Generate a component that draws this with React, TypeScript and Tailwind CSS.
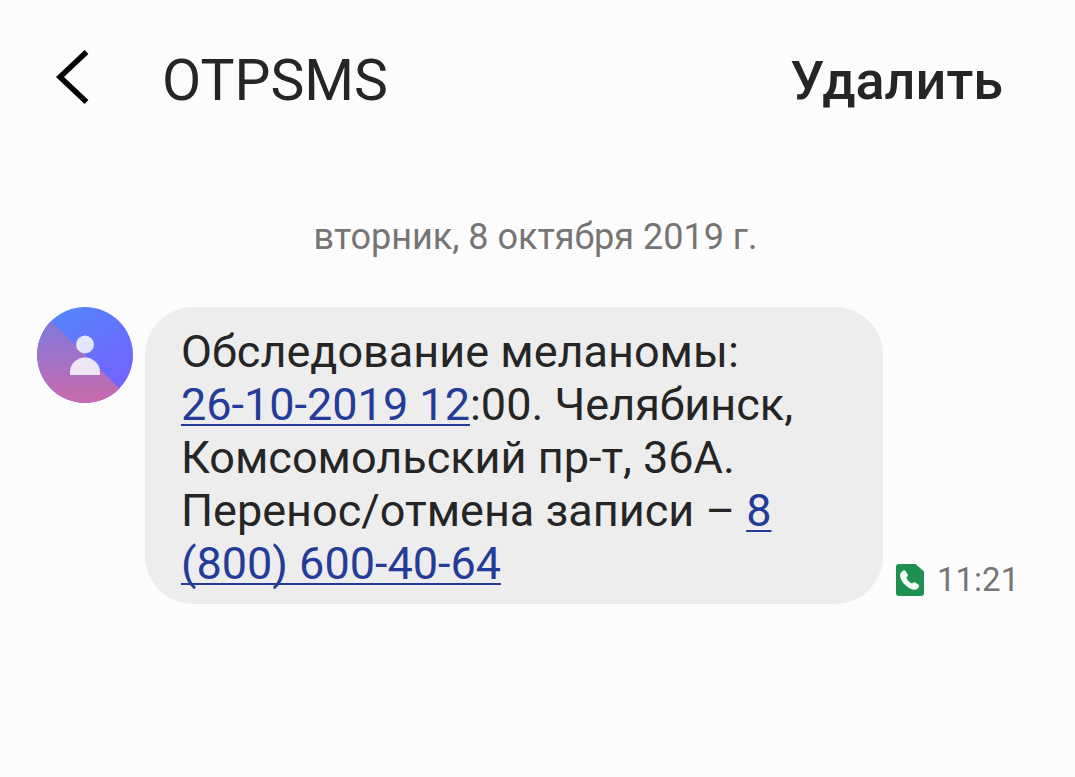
const message = {
  sender: "OTPSMS",
  date: "вторник, 8 октября 2019 г.",
  time: "11:21",
};

const linkClass = "text-[#233c99] underline decoration-2 underline-offset-4 [text-decoration-skip-ink:none]";

function BackIcon() {
  return (
    <svg viewBox="0 0 36 56" className="h-14 w-9" fill="none" stroke="#000" strokeWidth="5.5" aria-hidden="true">
      <path d="M32.5 4 L6 29 L32.5 54" />
    </svg>
  );
}

function Avatar() {
  return (
    <svg viewBox="0 0 96 96" className="size-24 shrink-0" aria-hidden="true">
      <defs>
        <linearGradient id="avatarTop" x1="0.2" y1="0" x2="0.8" y2="1">
          <stop offset="0" stopColor="#5287fd" />
          <stop offset="0.6" stopColor="#6a6cff" />
          <stop offset="1" stopColor="#7562ff" />
        </linearGradient>
        <linearGradient id="avatarBottom" x1="0" y1="0" x2="0" y2="1">
          <stop offset="0" stopColor="#8078dc" />
          <stop offset="0.5" stopColor="#a372c6" />
          <stop offset="1" stopColor="#cb6aaa" />
        </linearGradient>
      </defs>
      <circle cx="48" cy="48" r="48" fill="url(#avatarTop)" />
      {/* lower-left half of the disc */}
      <path d="M14.06 14.06 A48 48 0 1 0 82.5 81.38 Z" fill="url(#avatarBottom)" />
      <g fill="#fff" fillOpacity="0.82">
        <circle cx="48" cy="37.5" r="9" />
        <path d="M33 68 V65 A15 14.5 0 0 1 63 65 V68 Z" />
      </g>
    </svg>
  );
}

function SimIcon() {
  return (
    <svg viewBox="0 0 28 32" className="h-8 w-7 shrink-0" aria-hidden="true">
      <path d="M3 0 H19.5 L28 7.5 V29 A3 3 0 0 1 25 32 H3 A3 3 0 0 1 0 29 V3 A3 3 0 0 1 3 0 Z" fill="#1e9150" />
      <path
        d="M6 7.500 C7.500 6.200 8.800 6 9.500 7 L11.700 10.500 C12.200 11.600 11.700 12.200 10.400 13.500 C11.300 16.200 13.200 18.200 16 19.600 C17.400 18.400 18.200 17.900 19.200 18.500 L22.300 20.500 C23.600 21.400 23.400 22.500 22.200 24 C20.800 25.900 18.600 26.300 16 25.300 C10.500 23.200 6 18.700 4.300 13.200 C3.600 10.800 4.300 8.900 6 7.500 Z"
        fill="#f4fff8"
      />
    </svg>
  );
}

export default function App() {
  return (
    <div className="min-h-screen bg-[#fcfcfc] font-[Roboto,sans-serif] text-[#252525]">
      <header className="flex items-start pt-12 pr-18 pl-[54px]">
        <button type="button" aria-label="Назад" className="shrink-0">
          <BackIcon />
        </button>
        <h1 className="ml-18 flex-1 text-[57px] leading-[66px]">{message.sender}</h1>
        <button type="button" className="text-[54px] leading-[66px] font-medium">
          Удалить
        </button>
      </header>

      <main className="pt-[103px] pb-12">
        <p className="pr-1 text-center text-[36px] leading-10 text-[#757575]">{message.date}</p>

        <div className="mt-[50px] flex items-end pr-12 pl-[37px]">
          <div className="self-start">
            <Avatar />
          </div>
          <p className="ml-3 max-w-[738px] rounded-[48px] bg-[#ededed] px-9 pt-[18px] pb-[14px] text-[45px] leading-[53px]">
            Обследование меланомы:{" "}
            <a href="#calendar" className={`${linkClass} whitespace-nowrap`}>
              26-10-2019 12
            </a>
            :00. Челябинск, Комсомольский пр-т, 36А. Перенос/отмена записи –{" "}
            <a href="tel:88006004064" className={linkClass}>
              8 (800) 600-40-64
            </a>
          </p>
          <div className="ml-[13px] flex items-center gap-[13px] pb-1">
            <SimIcon />
            <time className="text-[33px] leading-10 text-[#757575]">{message.time}</time>
          </div>
        </div>
      </main>
    </div>
  );
}
